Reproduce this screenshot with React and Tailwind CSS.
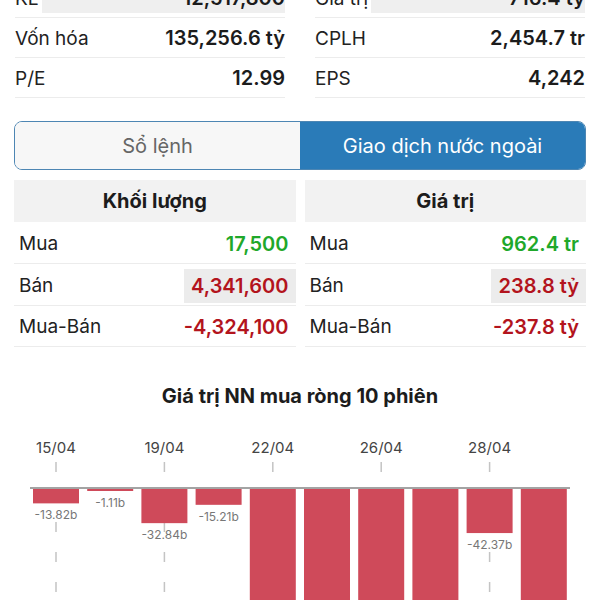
import React from 'react';

const stats = [
  [
    { label: 'KL', value: '12,517,800', flash: true },
    { label: 'Giá trị', value: '716.4 tỷ', flash: true },
  ],
  [
    { label: 'Vốn hóa', value: '135,256.6 tỷ' },
    { label: 'CPLH', value: '2,454.7 tr' },
  ],
  [
    { label: 'P/E', value: '12.99' },
    { label: 'EPS', value: '4,242' },
  ],
];

const foreign = {
  volume: [
    { label: 'Mua', value: '17,500', tone: 'up' },
    { label: 'Bán', value: '4,341,600', tone: 'down', flash: true },
    { label: 'Mua-Bán', value: '-4,324,100', tone: 'down' },
  ],
  value: [
    { label: 'Mua', value: '962.4 tr', tone: 'up' },
    { label: 'Bán', value: '238.8 tỷ', tone: 'down', flash: true },
    { label: 'Mua-Bán', value: '-237.8 tỷ', tone: 'down' },
  ],
};

const sessions = [
  { date: '15/04', v: -13.82 },
  { v: -1.11 },
  { date: '19/04', v: -32.84 },
  { v: -15.21 },
  { date: '22/04', v: -240 },
  { v: -240 },
  { date: '26/04', v: -240 },
  { v: -240 },
  { date: '28/04', v: -42.37 },
  { v: -240 },
];

function StatCell({ label, value, flash }) {
  return (
    <div className="flex h-[40px] items-center justify-between border-b border-[#ececec]">
      <span className="mt-[3px] shrink-0 whitespace-nowrap text-[19px] text-[#222]">{label}</span>
      <span
        className={`flex h-[31px] items-center justify-end whitespace-nowrap text-[20px] font-semibold text-[#1c1c1c] ${
          flash ? 'ml-[3px] flex-1 bg-[#efefef]' : ''
        }`}
      >
        {value}
      </span>
    </div>
  );
}

function FlowColumn({ title, rows }) {
  return (
    <div className="flex flex-col">
      <div className="flex h-[42px] items-center justify-center bg-[#f2f2f2] text-[20px] font-bold text-[#1c1c1c]">
        {title}
      </div>
      {rows.map((r, i) => (
        <div
          key={i}
          className={`flex items-center justify-between border-b border-[#ececec] pl-[5px] ${
            i === 2 ? 'h-[41px]' : 'h-[42px]'
          }`}
        >
          <span className="mt-[3px] text-[19px] text-[#222]">{r.label}</span>
          <span
            className={`mt-[2px] flex h-[34px] items-center px-[7px] text-[20px] font-semibold ${
              r.tone === 'up' ? 'text-[#1fa82a]' : 'text-[#b3141d]'
            } ${r.flash ? 'bg-[#ececec]' : ''}`}
          >
            {r.value}
          </span>
        </div>
      ))}
    </div>
  );
}

function NetChart() {
  const axisY = 67;
  const scale = 1.04;
  return (
    <svg width="600" height="180" viewBox="0 0 600 180" className="block">
      {sessions.map((s, i) => {
        const cx = 33 + i * 54.2 + 23;
        if (!s.date) return null;
        return (
          <g key={`d${i}`}>
            <text
              x={cx}
              y={32}
              textAnchor="middle"
              fontSize="15"
              fill="#444"
              fontFamily="Inter, sans-serif"
            >
              {s.date}
            </text>
            <line
              x1={cx}
              x2={cx}
              y1={41}
              y2={180}
              stroke="#c4c4c4"
              strokeWidth="1.5"
              strokeDasharray="10 20"
            />
          </g>
        );
      })}
      <line x1="30" x2="570" y1={axisY} y2={axisY} stroke="#a3a3a3" strokeWidth="2" />
      {sessions.map((s, i) => {
        const x = 33 + i * 54.2;
        const h = Math.max(2, Math.abs(s.v) * scale);
        return (
          <g key={`b${i}`}>
            <rect x={x} y={axisY + 1} width="46" height={h} fill="#cf4a5a" />
            {Math.abs(s.v) < 100 && (
              <text
                x={x + 23}
                y={axisY + 1 + h + 16}
                textAnchor="middle"
                fontSize="12"
                fill="#777"
                fontFamily="Inter, sans-serif"
              >
                {`${s.v.toFixed(2)}b`}
              </text>
            )}
          </g>
        );
      })}
    </svg>
  );
}

export default function App() {
  return (
    <div className="h-[600px] w-[600px] overflow-hidden bg-white font-['Inter',sans-serif]">
      <div className="-mt-[22px] grid grid-cols-2 gap-x-[30px] px-[15px]">
        <div className="flex flex-col">
          {stats.map((row, i) => (
            <StatCell key={i} {...row[0]} />
          ))}
        </div>
        <div className="flex flex-col">
          {stats.map((row, i) => (
            <StatCell key={i} {...row[1]} />
          ))}
        </div>
      </div>

      <div className="mx-[14px] mt-[23px] flex h-[49px] overflow-hidden rounded-[8px] border border-[#4d86b3]">
        <div className="flex flex-1 items-center justify-center bg-[#f7f7f7] text-[20px] text-[#666]">
          Sổ lệnh
        </div>
        <div className="flex flex-1 items-center justify-center bg-[#2a7bb8] text-[20px] text-white">
          Giao dịch nước ngoài
        </div>
      </div>

      <div className="mx-[14px] mt-[10px] grid grid-cols-2 gap-x-[9px]">
        <FlowColumn title="Khối lượng" rows={foreign.volume} />
        <FlowColumn title="Giá trị" rows={foreign.value} />
      </div>

      <div className="mt-[34px] text-center text-[20px] font-bold text-[#1c1c1c]">
        Giá trị NN mua ròng 10 phiên
      </div>
      <div className="mt-[10px]">
        <NetChart />
      </div>
    </div>
  );
}
